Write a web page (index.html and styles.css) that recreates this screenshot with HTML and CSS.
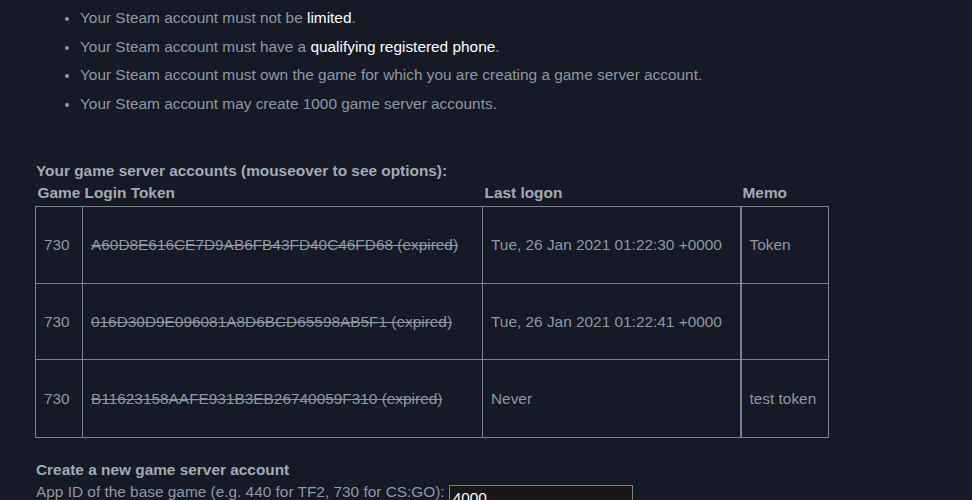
FILE: index.html
```html
<!DOCTYPE html>
<html>
<head>
<meta charset="utf-8">
<link rel="stylesheet" href="styles.css">
</head>
<body>
<div class="page">
  <ul class="reqs">
    <li>Your Steam account must not be <span class="hl">limited</span>.</li>
    <li>Your Steam account must have a <span class="hl">qualifying registered phone</span>.</li>
    <li>Your Steam account must own the game for which you are creating a game server account.</li>
    <li>Your Steam account may create 1000 game server accounts.</li>
  </ul>

  <div class="section-title">Your game server accounts (mouseover to see options):</div>
  <table class="accounts">
    <colgroup>
      <col class="c-game">
      <col class="c-token">
      <col class="c-logon">
      <col class="c-memo">
    </colgroup>
    <thead>
      <tr>
        <th>Game</th>
        <th>Login Token</th>
        <th>Last logon</th>
        <th>Memo</th>
      </tr>
    </thead>
    <tbody>
      <tr>
        <td>730</td>
        <td><span class="expired">A60D8E616CE7D9AB6FB43FD40C46FD68 (expired)</span></td>
        <td>Tue, 26 Jan 2021 01:22:30 +0000</td>
        <td class="memo">Token</td>
      </tr>
      <tr class="mid">
        <td>730</td>
        <td><span class="expired">016D30D9E096081A8D6BCD65598AB5F1 (expired)</span></td>
        <td>Tue, 26 Jan 2021 01:22:41 +0000</td>
        <td class="memo"></td>
      </tr>
      <tr class="last">
        <td>730</td>
        <td><span class="expired">B11623158AAFE931B3EB26740059F310 (expired)</span></td>
        <td>Never</td>
        <td class="memo">test token</td>
      </tr>
    </tbody>
  </table>

  <div class="create">
    <div class="section-title">Create a new game server account</div>
    <div class="form-row">
      <label for="appid">App ID of the base game (e.g. 440 for TF2, 730 for CS:GO):</label>
      <input id="appid" class="field" type="text" value="4000">
    </div>
  </div>
</div>
</body>
</html>
```

FILE: styles.css
```css
html, body {
  margin: 0;
  padding: 0;
  background: #151a24;
}
body {
  font-family: "Liberation Sans", Arial, sans-serif;
  font-size: 15.4px;
  color: #8f98a0;
  overflow: hidden;
}
.page {
  padding: 0 0 0 36px;
}
.reqs {
  margin: 0;
  padding: 8px 0 0 44px;
  list-style: disc;
}
.reqs li {
  line-height: 20px;
  margin-bottom: 8.7px;
}
.reqs li::marker {
  font-size: 13px;
}
.hl {
  color: #ffffff;
}
.section-title {
  font-weight: bold;
  color: #a4aab1;
  line-height: 20px;
}
.reqs + .section-title {
  margin-top: 47px;
}
.accounts {
  border-collapse: collapse;
  table-layout: fixed;
  margin-top: 2px;
  width: 793px;
  margin-left: -1px;
}
.c-game { width: 47px; }
.c-token { width: 400px; }
.c-logon { width: 258px; }
.c-memo { width: 88px; }
.accounts th {
  text-align: left;
  font-weight: bold;
  color: #a4aab1;
  padding: 0 2px 3px 2px;
  line-height: 20px;
  white-space: nowrap;
}
.accounts td {
  border: 1px solid #7c8087;
  height: 76px;
  padding: 0 8px;
  vertical-align: middle;
  white-space: nowrap;
}
.accounts tr.mid td {
  height: 75px;
}
.accounts tr.last td {
  height: 77px;
}
.accounts td.memo {
  border-left: 2px solid #7c8087;
}
.expired {
  text-decoration: line-through;
}
.create {
  margin-top: 22px;
}
.form-row {
  display: flex;
  align-items: flex-start;
  margin-top: 2px;
}
.form-row label {
  line-height: 20px;
}
.field {
  margin: 3px 0 0 4px;
  width: 184px;
  height: 22px;
  box-sizing: border-box;
  background: #1a1516;
  border: 1px solid #7c8087;
  color: #ffffff;
  font-family: "Liberation Sans", Arial, sans-serif;
  font-size: 15.4px;
  line-height: 18px;
  padding: 3px 3px 0;
  border-radius: 0;
  outline: none;
}
```
